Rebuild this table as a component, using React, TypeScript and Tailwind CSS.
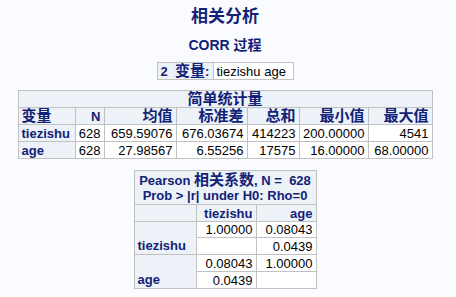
const font = { fontFamily: '"Liberation Sans", Arial, "Noto Sans CJK SC", sans-serif' }

const hd = 'border border-[#c1c1c1] bg-[#edf2f9] font-bold text-[#112277]'
const td = 'border border-[#c1c1c1] bg-white text-black'

const stats = [
  ['tiezishu', '628', '659.59076', '676.03674', '414223', '200.00000', '4541'],
  ['age', '628', '27.98567', '6.55256', '17575', '16.00000', '68.00000'],
]

function Cjk({ children }: { children: React.ReactNode }) {
  return <span className="text-[15px] leading-[15px]">{children}</span>
}

export default function App() {
  return (
    <div className="min-h-[297px] w-[456px] bg-[#fafbfe] text-[13px] leading-[15px]" style={font}>
      <div className="flex w-[450px] flex-col items-center">
        <h1 className="mt-[7px] text-[17px] font-bold leading-[20px] text-[#112277]">相关分析</h1>
        <h2 className="mt-[10px] text-[14px] font-bold leading-[16px] text-[#112277]">CORR 过程</h2>

        <table className="mt-[9px] border-collapse">
          <tbody>
            <tr className="h-[17px]">
              <th className={`${hd} w-[56px] whitespace-nowrap px-[3px] text-left`}>
                2&nbsp; <Cjk>变量</Cjk>:
              </th>
              <td className={`${td} w-[80px] px-[3px] text-left`}>tiezishu age</td>
            </tr>
          </tbody>
        </table>

        <table className="mt-[10px] table-fixed border-collapse">
          <colgroup>
            <col className="w-[57px]" />
            <col className="w-[29px]" />
            <col className="w-[72px]" />
            <col className="w-[71px]" />
            <col className="w-[52px]" />
            <col className="w-[69px]" />
            <col className="w-[64px]" />
          </colgroup>
          <thead>
            <tr className="h-[16px]">
              <th colSpan={7} className={`${hd} text-center`}>
                <Cjk>简单统计量</Cjk>
              </th>
            </tr>
            <tr className="h-[17px]">
              <th className={`${hd} px-[3px] text-left`}>
                <Cjk>变量</Cjk>
              </th>
              <th className={`${hd} px-[3px] text-right`}>N</th>
              {['均值', '标准差', '总和', '最小值', '最大值'].map((h) => (
                <th key={h} className={`${hd} whitespace-nowrap px-[3px] text-right`}>
                  <Cjk>{h}</Cjk>
                </th>
              ))}
            </tr>
          </thead>
          <tbody>
            {stats.map((r) => (
              <tr key={r[0]} className="h-[17px]">
                <th className={`${hd} px-[3px] text-left`}>{r[0]}</th>
                {r.slice(1).map((v, i) => (
                  <td key={i} className={`${td} px-[3px] text-right`}>{v}</td>
                ))}
              </tr>
            ))}
          </tbody>
        </table>

        <table className="mt-[11px] table-fixed border-collapse">
          <colgroup>
            <col className="w-[62px]" />
            <col className="w-[60px]" />
            <col className="w-[60px]" />
          </colgroup>
          <thead>
            <tr className="h-[34px]">
              <th colSpan={3} className={`${hd} whitespace-nowrap text-center leading-[15px]`}>
                Pearson <Cjk>相关系数</Cjk>, N =&nbsp; 628
                <br />
                Prob &gt; |r| under H0: Rho=0
              </th>
            </tr>
            <tr className="h-[17px]">
              <th className={hd}></th>
              <th className={`${hd} px-[3px] text-right`}>tiezishu</th>
              <th className={`${hd} px-[3px] text-right`}>age</th>
            </tr>
          </thead>
          <tbody>
            <tr className="h-[16px]">
              <th rowSpan={2} className={`${hd} px-[3px] pb-[1px] text-left align-bottom`}>tiezishu</th>
              <td className={`${td} px-[3px] text-right`}>1.00000</td>
              <td className={`${td} px-[3px] text-right`}>0.08043</td>
            </tr>
            <tr className="h-[17px]">
              <td className={td}></td>
              <td className={`${td} px-[3px] text-right`}>0.0439</td>
            </tr>
            <tr className="h-[17px]">
              <th rowSpan={2} className={`${hd} px-[3px] pb-[1px] text-left align-bottom`}>age</th>
              <td className={`${td} px-[3px] text-right`}>0.08043</td>
              <td className={`${td} px-[3px] text-right`}>1.00000</td>
            </tr>
            <tr className="h-[17px]">
              <td className={`${td} px-[3px] text-right`}>0.0439</td>
              <td className={td}></td>
            </tr>
          </tbody>
        </table>
      </div>
    </div>
  )
}
